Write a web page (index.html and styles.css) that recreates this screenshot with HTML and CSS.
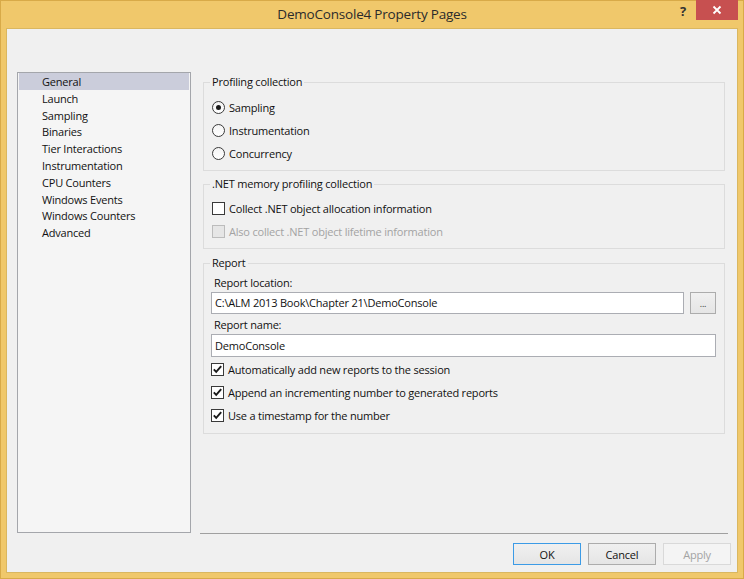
FILE: index.html
```html
<!DOCTYPE html>
<html lang="en">
<head>
<meta charset="utf-8">
<title>DemoConsole4 Property Pages</title>
<link rel="stylesheet" href="styles.css">
</head>
<body>
<div class="window">
  <div class="titlebar">
    <div class="spacer"></div>
    <div class="title">DemoConsole4 Property Pages</div>
    <div class="controls">
      <span class="help">?</span>
      <span class="close"><svg width="10" height="10" viewBox="0 0 10 10"><path d="M1.5 1.5 L8.5 8.5 M8.5 1.5 L1.5 8.5" stroke="#ffffff" stroke-width="1.8" fill="none"/></svg></span>
    </div>
  </div>
  <div class="client">
    <div class="main">
      <ul class="nav">
        <li class="sel">General</li>
        <li>Launch</li>
        <li>Sampling</li>
        <li>Binaries</li>
        <li>Tier Interactions</li>
        <li>Instrumentation</li>
        <li>CPU Counters</li>
        <li>Windows Events</li>
        <li>Windows Counters</li>
        <li>Advanced</li>
      </ul>
      <div class="pane">
        <fieldset class="group g-profiling">
          <legend>Profiling collection</legend>
          <div class="opt"><span class="radio on"></span><span>Sampling</span></div>
          <div class="opt"><span class="radio"></span><span>Instrumentation</span></div>
          <div class="opt"><span class="radio"></span><span>Concurrency</span></div>
        </fieldset>
        <fieldset class="group g-memory">
          <legend>.NET memory profiling collection</legend>
          <div class="opt"><span class="check"></span><span>Collect .NET object allocation information</span></div>
          <div class="opt disabled"><span class="check"></span><span>Also collect .NET object lifetime information</span></div>
        </fieldset>
        <fieldset class="group g-report">
          <legend>Report</legend>
          <div class="label">Report location:</div>
          <div class="field-row">
            <div class="textbox">C:\ALM 2013 Book\Chapter 21\DemoConsole</div>
            <div class="browse">...</div>
          </div>
          <div class="label label-2">Report name:</div>
          <div class="textbox textbox-name">DemoConsole</div>
          <div class="report-opts">
            <div class="opt"><span class="check on"><svg width="13" height="13" viewBox="0 0 13 13"><path d="M2.8 6.4 L5.2 8.9 L10.2 3.2" stroke="#1a1a1a" stroke-width="1.9" fill="none"/></svg></span><span>Automatically add new reports to the session</span></div>
            <div class="opt"><span class="check on"><svg width="13" height="13" viewBox="0 0 13 13"><path d="M2.8 6.4 L5.2 8.9 L10.2 3.2" stroke="#1a1a1a" stroke-width="1.9" fill="none"/></svg></span><span>Append an incrementing number to generated reports</span></div>
            <div class="opt"><span class="check on"><svg width="13" height="13" viewBox="0 0 13 13"><path d="M2.8 6.4 L5.2 8.9 L10.2 3.2" stroke="#1a1a1a" stroke-width="1.9" fill="none"/></svg></span><span>Use a timestamp for the number</span></div>
          </div>
        </fieldset>
      </div>
    </div>
    <div class="footer">
      <button class="btn btn-default">OK</button>
      <button class="btn">Cancel</button>
      <button class="btn btn-disabled">Apply</button>
    </div>
  </div>
</div>
</body>
</html>
```

FILE: styles.css
```css
html, body {
  margin: 0;
  padding: 0;
}
body {
  width: 744px;
  height: 579px;
  overflow: hidden;
  font-family: "Open Sans", "Noto Sans", sans-serif;
  font-size: 11px;
  letter-spacing: -0.2px;
  color: #111111;
}
.window {
  box-sizing: border-box;
  width: 744px;
  height: 579px;
  background: #f0c86b;
  border: 1px solid #d8aa48;
  display: flex;
  flex-direction: column;
}
.titlebar {
  height: 27px;
  flex: none;
  display: grid;
  grid-template-columns: 1fr auto 1fr;
  align-items: start;
}
.title {
  font-size: 13.5px;
  letter-spacing: -0.2px;
  line-height: 27px;
  color: #2b2b2b;
  white-space: nowrap;
}
.controls {
  justify-self: end;
  display: flex;
  align-items: flex-start;
  margin-right: 5px;
}
.help {
  font-size: 13px;
  font-weight: 700;
  line-height: 20px;
  color: #333333;
  margin-right: 10px;
}
.close {
  width: 42px;
  height: 20px;
  margin-top: -1px;
  background: #c75050;
  display: flex;
  align-items: center;
  justify-content: center;
}
.client {
  flex: 1;
  margin: 0 5px 5px 5px;
  border: 1px solid #dab760;
  background: #f0f0f0;
  padding: 43px 6px 0 10px;
  display: flex;
  flex-direction: column;
}
.main {
  display: flex;
  align-items: flex-start;
}
.nav {
  box-sizing: border-box;
  width: 174px;
  height: 461px;
  margin: 0;
  padding: 0 1px;
  list-style: none;
  background: #f5f5f5;
  border: 1px solid #a4a6ab;
}
.nav li {
  height: 16.8px;
  line-height: 17.5px;
  padding-left: 23px;
  color: #111111;
  white-space: nowrap;
}
.nav li.sel {
  background: #cbcddb;
}
.pane {
  box-sizing: border-box;
  width: 528px;
  height: 462px;
  margin-left: 9px;
  border-bottom: 1px solid #a0a0a0;
  display: flex;
  flex-direction: column;
}
.group {
  margin: 0 3px;
  border: 1px solid #dcdcdc;
  padding: 0 6px 4px 6px;
  min-width: 0;
}
.group legend {
  padding: 0 2px;
  line-height: 16px;
  color: #111111;
}
.g-profiling {
  margin-top: 2px;
  padding-top: 6px;
  padding-bottom: 5px;
}
.g-memory {
  margin-top: 5px;
  padding-top: 5px;
  padding-bottom: 5px;
}
.g-report {
  margin-top: 6px;
  padding-top: 3px;
  padding-bottom: 6px;
}
.opt {
  height: 23px;
  display: flex;
  align-items: center;
  padding-left: 2px;
  gap: 4px;
  white-space: nowrap;
}
.opt.disabled {
  color: #a3a3a3;
}
.radio {
  box-sizing: border-box;
  width: 13px;
  height: 13px;
  border: 1px solid #3a3a3a;
  border-radius: 50%;
  background: linear-gradient(#f4f4f4, #ffffff);
  display: flex;
  align-items: center;
  justify-content: center;
  flex: none;
}
.radio.on::after {
  content: "";
  width: 5px;
  height: 5px;
  border-radius: 50%;
  background: #1a1a1a;
}
.check {
  box-sizing: border-box;
  width: 13px;
  height: 13px;
  border: 1px solid #3a3a3a;
  background: #ffffff;
  flex: none;
}
.check svg {
  display: block;
  margin: -1px;
}
.opt.disabled .check {
  border-color: #bcbcbc;
  background: #e6e6e6;
}
.label {
  line-height: 18px;
  padding-left: 4px;
  color: #111111;
}
.label-2 {
  margin-top: 2px;
}
.field-row {
  display: flex;
  align-items: stretch;
  height: 22px;
}
.textbox {
  box-sizing: border-box;
  border: 1px solid #abadb3;
  background: #ffffff;
  padding-left: 3px;
  line-height: 20px;
  white-space: nowrap;
  color: #111111;
  margin-left: 1px;
}
.field-row .textbox {
  flex: 1;
}
.textbox-name {
  height: 23px;
  line-height: 21px;
  margin-right: 2px;
}
.browse {
  box-sizing: border-box;
  width: 26px;
  margin-left: 6px;
  margin-right: 2px;
  border: 1px solid #acacac;
  background: linear-gradient(#f0f0f0, #e5e5e5);
  text-align: center;
  font-size: 9px;
  line-height: 22px;
  color: #333333;
}
.report-opts {
  margin-top: 1px;
}
.report-opts .opt {
  padding-left: 1px;
}
.footer {
  margin-top: 9px;
  display: flex;
  justify-content: flex-end;
  gap: 7px;
}
.btn {
  box-sizing: border-box;
  width: 68px;
  height: 22px;
  margin: 0;
  padding: 0;
  font-family: "Open Sans", "Noto Sans", sans-serif;
  font-size: 11px;
  letter-spacing: -0.2px;
  color: #111111;
  border: 1px solid #acacac;
  background: linear-gradient(#f0f0f0, #e5e5e5);
  border-radius: 0;
}
.btn-default {
  border-color: #3c9be6;
}
.btn-disabled {
  border-color: #d9d9d9;
  background: #f4f4f4;
  color: #a3a3a3;
}
```
